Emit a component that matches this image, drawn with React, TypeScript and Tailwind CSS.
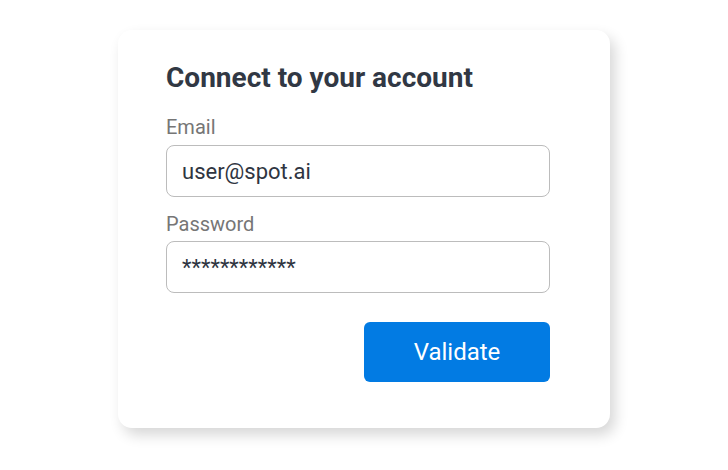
export default function App() {
  return (
    <div className="w-[728px] h-[470px] bg-white pl-[118px] pt-[30px]" style={{ fontFamily: 'Roboto, "Noto Sans", sans-serif' }}>
      <div className="w-[492px] h-[398px] bg-white rounded-[14px] shadow-[5px_7px_14px_rgba(0,0,0,0.16)] pl-[48px] pr-[60px] pt-[34px]">
        <h1 className="text-[28px] leading-[28px] font-bold text-[#313844]">Connect to your account</h1>
        <div className="mt-[23px] text-[20px] leading-[24px] text-[#767676]">Email</div>
        <div className="mt-[6px] h-[52px] rounded-[8px] border border-[#bcbcbc] flex items-center px-[15px] text-[22px] text-[#2f3541]">user@spot.ai</div>
        <div className="mt-[15px] text-[20px] leading-[24px] text-[#767676]">Password</div>
        <div className="mt-[5px] h-[52px] rounded-[8px] border border-[#bcbcbc] flex items-center px-[15px] text-[22px] text-[#2f3541]">************</div>
        <div className="flex justify-end mt-[29px]">
          <button className="w-[186px] h-[60px] rounded-[6px] bg-[#027be3] text-white text-[24px]">Validate</button>
        </div>
      </div>
    </div>
  );
}
